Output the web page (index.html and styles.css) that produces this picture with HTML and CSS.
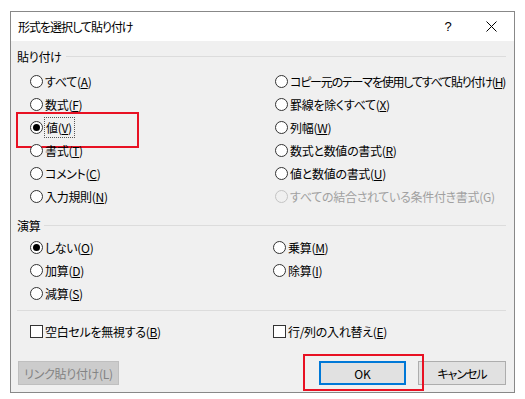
FILE: index.html
```html
<!DOCTYPE html>
<html lang="ja">
<head>
  <meta charset="UTF-8" />
  <title>形式を選択して貼り付け</title>
  <link rel="stylesheet" href="styles.css">
</head>
<body>

  <div class="dialog">
    <div class="titlebar">
      <span class="title">形式を選択して貼り付け</span>
      <span class="tb-btn help">?</span>
      <span class="tb-btn close">
        <svg width="11" height="11" viewBox="0 0 11 11"><path d="M0.5 0.5 L10.5 10.5 M10.5 0.5 L0.5 10.5" stroke="#000" stroke-width="1" fill="none"/></svg>
      </span>
    </div>

    <div class="content">
      <div class="group-head"><span>貼り付け</span><i class="rule"></i></div>
      <div class="options paste">
        <label class="opt"><span class="radio"></span>すべて(<u>A</u>)</label>
        <label class="opt tight"><span class="radio"></span>コピー元のテーマを使用してすべて貼り付け(<u>H</u>)</label>
        <label class="opt"><span class="radio"></span>数式(<u>F</u>)</label>
        <label class="opt"><span class="radio"></span>罫線を除くすべて(<u>X</u>)</label>
        <label class="opt"><span class="radio checked"></span><span class="focus">値(<u>V</u>)</span><span class="mark"></span></label>
        <label class="opt"><span class="radio"></span>列幅(<u>W</u>)</label>
        <label class="opt"><span class="radio"></span>書式(<u>T</u>)</label>
        <label class="opt"><span class="radio"></span>数式と数値の書式(<u>R</u>)</label>
        <label class="opt"><span class="radio"></span>コメント(<u>C</u>)</label>
        <label class="opt"><span class="radio"></span>値と数値の書式(<u>U</u>)</label>
        <label class="opt"><span class="radio"></span>入力規則(<u>N</u>)</label>
        <label class="opt disabled"><span class="radio"></span>すべての結合されている条件付き書式(G)</label>
      </div>

      <div class="group-head calc"><span>演算</span><i class="rule"></i></div>
      <div class="options ops">
        <label class="opt"><span class="radio checked"></span>しない(<u>O</u>)</label>
        <label class="opt"><span class="radio"></span>乗算(<u>M</u>)</label>
        <label class="opt"><span class="radio"></span>加算(<u>D</u>)</label>
        <label class="opt"><span class="radio"></span>除算(<u>I</u>)</label>
        <label class="opt"><span class="radio"></span>減算(<u>S</u>)</label>
      </div>

      <i class="rule separator"></i>

      <div class="options checks">
        <label class="opt"><span class="check"></span>空白セルを無視する(<u>B</u>)</label>
        <label class="opt"><span class="check"></span>行/列の入れ替え(<u>E</u>)</label>
      </div>

      <div class="buttons">
        <button class="btn link" disabled>リンク貼り付け(L)</button>
        <span class="spacer"></span>
        <span class="ok-wrap">
          <button class="btn ok">OK</button>
          <span class="mark ok-mark"></span>
        </span>
        <button class="btn cancel">キャンセル</button>
      </div>
    </div>
  </div>

</body>
</html>
```

FILE: styles.css
```css
:root {
  --face: #f0f0f0;
  --text: #000;
  --rule: #dcdcdc;
  --mark: #e81123;
  --blue: #0078d7;
}

body {
  margin: 0;
  background: #fff;
  color: var(--text);
  font-family: "Noto Sans CJK JP", "Noto Sans", sans-serif;
  font-size: 12px;
  font-feature-settings: "palt";
  letter-spacing: -0.3px;
}

.dialog {
  margin: 11px 0 0 10px;
  width: 505px;
  height: 382px;
  box-sizing: border-box;
  border: 1px solid #888;
  background: var(--face);
  display: flex;
  flex-direction: column;
}

.titlebar {
  height: 29px;
  background: #fff;
  display: flex;
  align-items: center;
  padding-left: 7px;
}

.title {
  flex: 1;
  letter-spacing: -1px;
}

.tb-btn {
  height: 29px;
  display: flex;
  align-items: center;
  justify-content: center;
}

.help {
  width: 40px;
  font-size: 13px;
  font-family: "Liberation Sans", sans-serif;
  letter-spacing: 0;
}

.close {
  width: 46px;
}

.content {
  flex: 1;
  padding: 7px 8px 0 6px;
  display: flex;
  flex-direction: column;
}

.group-head {
  display: flex;
  align-items: center;
  height: 16px;
}

.rule {
  display: block;
  flex: 1;
  height: 1px;
  background: var(--rule);
  margin-left: 4px;
}

.options {
  display: grid;
  grid-template-columns: 245px 1fr;
  grid-auto-rows: 23px;
  padding-left: 13px;
}

.paste {
  margin-top: 6px;
}

.calc {
  margin-top: 9px;
}

.ops {
  margin-top: 3px;
  grid-template-columns: 243px 1fr;
}

.separator {
  flex: none;
  margin: 5px 0 0 0;
}

.checks {
  margin-top: 9px;
  grid-template-columns: 243px 1fr;
}

.opt {
  display: flex;
  align-items: center;
  position: relative;
  white-space: nowrap;
}

.tight {
  letter-spacing: -1.2px;
}

.radio,
.check {
  flex: none;
  width: 13px;
  height: 13px;
  box-sizing: border-box;
  border: 1px solid #333;
  background: #fff;
  margin-right: 2px;
}

.radio {
  border-radius: 50%;
  display: flex;
  align-items: center;
  justify-content: center;
}

.radio.checked::after {
  content: "";
  width: 7px;
  height: 7px;
  border-radius: 50%;
  background: #000;
}

.disabled {
  color: #a0a0a0;
}

.disabled .radio {
  border-color: #c4c4c4;
  background: #f0f0f0;
}

.focus {
  padding: 1px 2px 1px 1px;
  outline: 1px dotted #555;
  outline-offset: 0;
}

.mark {
  position: absolute;
  border: 2px solid var(--mark);
  pointer-events: none;
}

.opt .mark {
  left: -14px;
  top: -4px;
  width: 123px;
  height: 36px;
  box-sizing: border-box;
}

.buttons {
  display: flex;
  align-items: center;
  margin-top: auto;
  margin-bottom: 7px;
  padding-left: 1px;
}

.spacer {
  flex: 1;
}

.btn {
  height: 24px;
  box-sizing: border-box;
  border: 1px solid #adadad;
  background: #e1e1e1;
  font-family: inherit;
  font-size: 12px;
  font-feature-settings: "palt";
  letter-spacing: -0.3px;
  color: #000;
  padding: 0;
}

.link {
  width: 101px;
  background: #cccccc;
  border-color: #bfbfbf;
  color: #838383;
}

.ok-wrap {
  position: relative;
  display: flex;
}

.ok {
  width: 87px;
  border: 2px solid var(--blue);
  letter-spacing: 0;
}

.ok-mark {
  left: -16px;
  top: -7px;
  right: -18px;
  bottom: -6px;
}

.cancel {
  width: 88px;
  margin-left: 12px;
  letter-spacing: -1px;
}
```
